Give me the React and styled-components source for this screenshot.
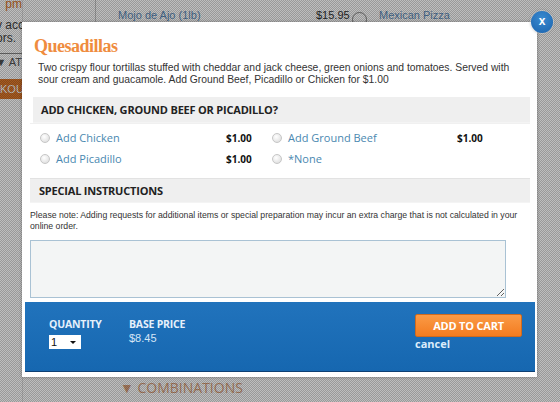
import React from 'react';
import styled, { createGlobalStyle } from 'styled-components';

const options = [
  { id: 'chicken', label: 'Add Chicken', price: '$1.00' },
  { id: 'beef', label: 'Add Ground Beef', price: '$1.00' },
  { id: 'picadillo', label: 'Add Picadillo', price: '$1.00' },
  { id: 'none', label: '*None', price: '' },
];

function App() {
  return (
    <Page>
      <GlobalStyle />
      <Backdrop>
        <Sidebar>
          <SideHours>pm</SideHours>
          <SideText>y acc<br />ors.</SideText>
          <SideRule />
          <SideMenu>▼ AT</SideMenu>
          <SideButton>KOU</SideButton>
        </Sidebar>
        <Main>
          <MenuRow>
            <MenuCell />
            <MenuLink $gap={22} $width={198}>Mojo de Ajo (1lb)</MenuLink>
            <MenuPrice>$15.95</MenuPrice>
            <MenuIcon />
            <MenuLink $gap={12} $width={100}>Mexican Pizza</MenuLink>
          </MenuRow>
          <Spacer />
          <CategoryToggle>▼ COMBINATIONS</CategoryToggle>
        </Main>
      </Backdrop>
      <Overlay />

      <Modal>
        <CloseButton>x</CloseButton>
        <Body>
          <Title>Quesadillas</Title>
          <Description>
            Two crispy flour tortillas stuffed with cheddar and jack cheese, green onions and tomatoes. Served with
            sour cream and guacamole. Add Ground Beef, Picadillo or Chicken for $1.00
          </Description>

          <SectionBar $inset={3}>
            <SectionTitle>Add Chicken, Ground Beef or Picadillo?</SectionTitle>
          </SectionBar>
          <OptionGrid>
            {options.map(option => (
              <Option key={option.id}>
                <Radio />
                <OptionLabel>{option.label}</OptionLabel>
                <OptionPrice>{option.price}</OptionPrice>
              </Option>
            ))}
          </OptionGrid>

          <SectionBar $inset={0} $divided>
            <SectionTitle>Special Instructions</SectionTitle>
          </SectionBar>
          <Note>
            Please note: Adding requests for additional items or special preparation may incur an extra charge that is not calculated in your
            online order.
          </Note>
          <Instructions />
        </Body>

        <Footer>
          <Field>
            <FieldLabel>Quantity</FieldLabel>
            <QuantitySelect>
              <span>1</span>
              <Caret />
            </QuantitySelect>
          </Field>
          <Field>
            <FieldLabel>Base Price</FieldLabel>
            <PriceValue>$8.45</PriceValue>
          </Field>
          <Actions>
            <CartButton>ADD TO CART</CartButton>
            <CancelLink>cancel</CancelLink>
          </Actions>
        </Footer>
      </Modal>
    </Page>
  );
}

export default App;

const GlobalStyle = createGlobalStyle`
  html, body {
    margin: 0;
    padding: 0;
    width: 560px;
    height: 402px;
    overflow: hidden;
    background: #ffffff;
  }
`;

const Page = styled.div`
  position: relative;
  width: 560px;
  height: 402px;
  overflow: hidden;
  font-family: "Liberation Sans", Arial, sans-serif;
`;

/* page behind the dialog */
const Backdrop = styled.div`
  display: flex;
  height: 402px;
`;

const Sidebar = styled.div`
  width: 22px;
  overflow: hidden;
  display: flex;
  flex-direction: column;
  align-items: flex-end;
  border-right: 1px solid #e4e4e4;
  font-size: 12px;
  white-space: nowrap;
`;

const SideHours = styled.div`
  color: #e07a2c;
  margin-top: -3px;
`;

const SideText = styled.div`
  color: #444;
  margin-top: 8px;
  line-height: 13px;
  align-self: flex-start;
  margin-left: -4px;
`;

const SideRule = styled.div`
  width: 100%;
  border-top: 1px solid #888;
  margin-top: 8px;
`;

const SideMenu = styled.div`
  color: #555;
  font-size: 11px;
  margin-top: 2px;
`;

const SideButton = styled.div`
  margin-top: 11px;
  width: 100%;
  height: 20px;
  background: #e07a2c;
  color: #fff;
  font-size: 11px;
  line-height: 20px;
  text-align: right;
`;

const Main = styled.div`
  flex: 1;
  display: flex;
  flex-direction: column;
`;

const MenuRow = styled.div`
  display: flex;
  align-items: center;
  height: 30px;
  font-size: 11px;
`;

const MenuCell = styled.div`
  flex: none;
  width: 72px;
  height: 22px;
  align-self: flex-start;
  border-right: 1px solid #ccc;
`;

const MenuLink = styled.span`
  flex: none;
  color: #5f8fc0;
  margin-left: ${p => p.$gap}px;
  width: ${p => p.$width}px;
`;

const MenuPrice = styled.span`
  flex: none;
  color: #333;
  width: 36px;
`;

const MenuIcon = styled.span`
  flex: none;
  width: 13px;
  height: 13px;
  margin-top: 8px;
  border: 1px solid #888;
  border-radius: 50%;
`;

const Spacer = styled.div`
  flex: 1;
`;

const CategoryToggle = styled.div`
  margin: 0 0 5px 97px;
  font-family: "Open Sans", sans-serif;
  font-size: 14px;
  color: #dba27c;
`;

const Overlay = styled.div`
  position: absolute;
  inset: 0;
  background: repeating-conic-gradient(rgba(0, 0, 0, 0.4) 0 25%, rgba(0, 0, 0, 0.26) 0 50%) 0 0 / 2px 2px;
`;

/* dialog */
const Modal = styled.div`
  position: absolute;
  left: 22px;
  top: 22px;
  width: 515px;
  box-sizing: border-box;
  background: #ffffff;
  padding: 0 2px 5px 3px;
  box-shadow: 0 0 3px rgba(0, 0, 0, 0.3);
`;

const CloseButton = styled.div`
  position: absolute;
  top: -11px;
  right: -16px;
  width: 22px;
  height: 22px;
  border-radius: 50%;
  background: radial-gradient(circle at 50% 35%, #3a8ad0, #1a63ae);
  box-shadow: 0 0 0 1px #ffffff66, 0 0 3px rgba(0, 0, 0, 0.4);
  color: #fff;
  font: bold 12px/20px "Liberation Sans", Arial, sans-serif;
  text-align: center;
`;

const Body = styled.div`
  padding: 13px 5px 0 5px;
`;

const Title = styled.h2`
  margin: 0 0 5px 4px;
  font-family: "Liberation Serif", "Times New Roman", serif;
  font-size: 18px;
  line-height: 22px;
  font-weight: bold;
  letter-spacing: -0.5px;
  color: #ef8c3e;
`;

const Description = styled.p`
  margin: 0 0 11px 8px;
  font-size: 10.35px;
  line-height: 12px;
  color: #333;
`;

const SectionBar = styled.div`
  margin-left: ${p => p.$inset}px;
  height: ${p => (p.$divided ? 23 : 25)}px;
  display: flex;
  align-items: center;
  padding-left: ${p => (p.$divided ? 9 : 8)}px;
  background: #efefef;
  border-top: ${p => (p.$divided ? '1px solid #e2e2e2' : 'none')};
  border-bottom: 1px solid #f4f4f4;
`;

const SectionTitle = styled.div`
  font-family: "Open Sans", sans-serif;
  font-weight: bold;
  font-size: 11px;
  text-transform: uppercase;
  color: #222;
  letter-spacing: -0.2px;
`;

const OptionGrid = styled.div`
  display: grid;
  grid-template-columns: 232px 231px;
  grid-auto-rows: 21px;
  padding: 3px 0 9px 10px;
  border-top: 1px solid #f0f0f0;
`;

const Option = styled.label`
  display: flex;
  align-items: center;
`;

const Radio = styled.span`
  width: 8px;
  height: 8px;
  border-radius: 50%;
  border: 1px solid #c6c6c6;
  background: radial-gradient(circle at 40% 35%, #ffffff, #d8d8d8);
  margin-right: 6px;
`;

const OptionLabel = styled.span`
  flex: 1;
  font-family: "Open Sans", sans-serif;
  font-size: 11px;
  color: #4a88b0;
`;

const OptionPrice = styled.span`
  width: 46px;
  font-family: "Open Sans", sans-serif;
  font-weight: bold;
  font-size: 10px;
  color: #111;
`;

const Note = styled.p`
  margin: 7px 0 0 0;
  font-size: 8.7px;
  line-height: 11px;
  color: #333;
`;

const Instructions = styled.textarea`
  display: block;
  box-sizing: border-box;
  width: 476px;
  height: 58px;
  margin: 8px 0 4px 0;
  background: #f3f5f5;
  border: 1px solid #a9c2d4;
  border-radius: 0;
  resize: both;
`;

const Footer = styled.div`
  display: flex;
  align-items: flex-start;
  height: 70px;
  padding: 12px 13px 0 24px;
  box-sizing: border-box;
  background: linear-gradient(#2173bc, #1667b0);
  border-bottom: 1px solid #0d3f73;
`;

const Field = styled.div`
  width: 80px;
  display: flex;
  flex-direction: column;
  align-items: flex-start;
  padding-top: 3px;
`;

const FieldLabel = styled.div`
  font-family: "Open Sans", sans-serif;
  font-weight: bold;
  font-size: 10.5px;
  text-transform: uppercase;
  color: #e6f0fb;
  letter-spacing: -0.2px;
`;

const QuantitySelect = styled.div`
  display: flex;
  align-items: center;
  justify-content: space-between;
  width: 32px;
  height: 14px;
  box-sizing: border-box;
  padding: 0 5px 0 2px;
  margin-top: 4px;
  background: #fff;
  font-size: 11px;
  color: #111;
`;

const Caret = styled.span`
  width: 0;
  height: 0;
  border-left: 3px solid transparent;
  border-right: 3px solid transparent;
  border-top: 3px solid #111;
`;

const PriceValue = styled.div`
  margin-top: 1px;
  font-size: 11px;
  color: #d6e6f6;
`;

const Actions = styled.div`
  margin-left: auto;
  display: flex;
  flex-direction: column;
  align-items: flex-start;
`;

const CartButton = styled.button`
  width: 107px;
  height: 23px;
  border: 1px solid #d06a1e;
  border-radius: 2px;
  background: linear-gradient(#fb9a46, #f27c20);
  color: #fff;
  font-family: "Open Sans", sans-serif;
  font-weight: bold;
  font-size: 11px;
  letter-spacing: -0.2px;
  padding: 0;
`;

const CancelLink = styled.span`
  margin-top: -1px;
  font-family: "Open Sans", sans-serif;
  font-weight: bold;
  font-size: 11px;
  color: #dcecfb;
`;
